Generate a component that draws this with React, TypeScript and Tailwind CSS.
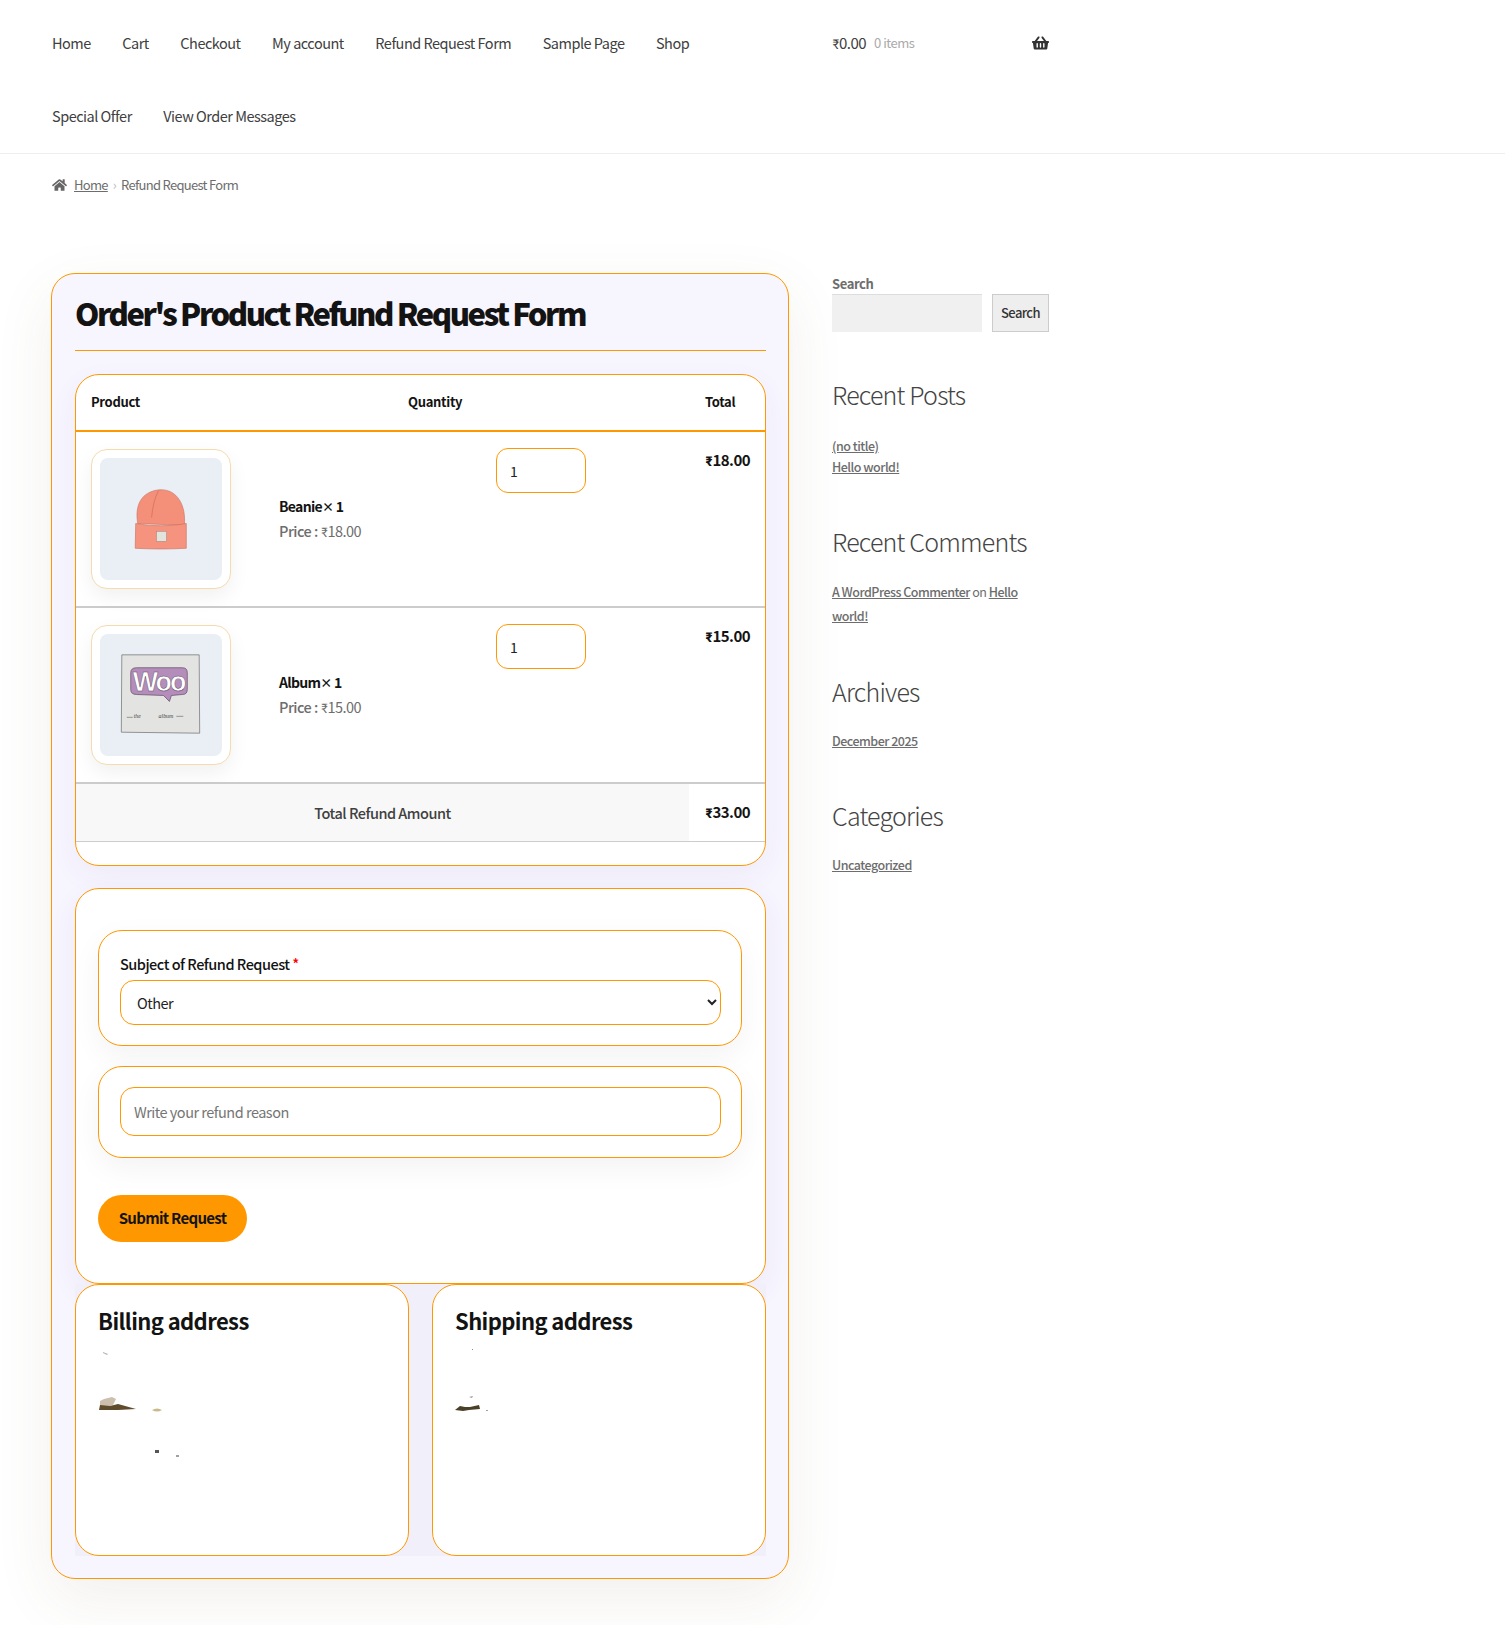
import { FaHome, FaShoppingBasket } from "react-icons/fa"

const font = "font-['Noto_Sans_CJK_SC','Source_Sans_3','Noto_Sans',sans-serif]"

const navItems = [
  "Home",
  "Cart",
  "Checkout",
  "My account",
  "Refund Request Form",
  "Sample Page",
  "Shop",
  "Special Offer",
  "View Order Messages",
]

// leftover smudges in the address cards
const billingMarks = [
  { d: "M5 7 L10 9 L9 10 L5 8 Z", fill: "#b8b4b0" },
  { d: "M2 56 L6 54 L14 52 L18 54 L15 60 L8 62 L2 62 Z", fill: "#cdbfae" },
  { d: "M1 65 L2 60 L12 61 L20 59 L38 64 L20 65 Z", fill: "#5f4c2c" },
  { d: "M54 65 Q59 62 64 65 Q59 68 54 65 Z", fill: "#c9b98c" },
  { d: "M57 105 L61 105 L61 108 L57 108 Z", fill: "#555555" },
  { d: "M78 110 L81 110 L81 112 L78 112 Z", fill: "#a0a0a0" },
]

const shippingMarks = [
  { d: "M17 4 L18 4 L18 5 L17 5 Z", fill: "#888888" },
  { d: "M14 52 L18 51 L17 53 Z", fill: "#a09a90" },
  { d: "M0 65 L5 61 L10 62 L15 62 L24 60 L25 64 L14 65 L8 66 Z", fill: "#4a3f28" },
  { d: "M31 65 L33 65 L33 66 L31 66 Z", fill: "#a0a0a0" },
]

function HatImage() {
  return (
    <svg viewBox="0 0 123 123" className="h-full w-full">
      <path d="M38 66 C35 48 41 34 60 32 C78 31 87 48 85 68 Z" fill="#f4907a" stroke="#c8705f" strokeWidth="0.6" />
      <path d="M59 33 C55 40 53 50 52 60" fill="none" stroke="#d96e5a" strokeWidth="0.8" />
      <path d="M36 66 C52 69 72 69 87 66 L87 91 C70 92 52 92 35.5 91 Z" fill="#f6937f" stroke="#c46c5a" strokeWidth="0.6" />
      <rect x="57" y="74" width="10" height="10" fill="#e3e3dd" stroke="#a08078" strokeWidth="0.5" />
    </svg>
  )
}

function AlbumImage() {
  return (
    <svg viewBox="0 0 123 123" className="h-full w-full">
      <path d="M22 21 L100 21 L100.5 100 L21.5 99 Z" fill="#e3e3e1" stroke="#6b6b6b" strokeWidth="0.7" />
      <path d="M37 34 L83 34 Q88 34 88 39 L88 56 Q88 61 83 61 L72 62 L70 68 L64 62 L37 61 Q31 61 31 56 L31 39 Q31 34 37 34 Z" fill="#b48dbb" stroke="#5e4a66" strokeWidth="0.7" />
      <text x="33" y="57" fontSize="27" fontWeight="700" fill="#ffffff" stroke="#5e4a66" strokeWidth="0.5" textLength="54" fontFamily="'Liberation Sans', sans-serif">Woo</text>
      <text x="34" y="85" fontSize="6" fontStyle="italic" fill="#444444" fontFamily="'Liberation Serif', serif">the</text>
      <text x="59" y="85" fontSize="6" fontStyle="italic" fill="#444444" fontFamily="'Liberation Serif', serif">album</text>
      <path d="M27 84 L33 84 M77 83 L84 83" stroke="#444444" strokeWidth="0.5" />
    </svg>
  )
}

function ProductRow({ name, price, image }: { name: string; price: string; image: React.ReactNode }) {
  return (
    <div className="flex h-[176px] border-b-2 border-[#cccccc]">
      <div className="flex w-[317px] items-start pl-[15px] pt-[17px]">
        <div className="h-[140px] w-[140px] shrink-0 rounded-[16px] border border-[#f4dcae] bg-white p-[8px] shadow-[0_8px_20px_rgba(0,0,0,0.06)]">
          <div className="h-[122px] w-[122px] overflow-hidden rounded-[8px] bg-[#e9eff4]">{image}</div>
        </div>
        <div className="ml-[48px] flex h-[138px] flex-col justify-center leading-[24px]">
          <div className="text-[14px] font-bold tracking-[-0.7px] text-[#131313]">
            {name}
            <span className="text-[12px]">×</span> 1
          </div>
          <div className="text-[14.5px] tracking-[-0.5px] text-[#6d6d6d]">
            <span className="font-medium">Price :</span> ₹{price}
          </div>
        </div>
      </div>
      <div className="flex w-[296px] justify-center pt-[16px]">
        <input
          type="number"
          defaultValue={1}
          className="h-[45px] w-[90px] rounded-[12px] border border-[#ff9800] bg-white px-[13px] text-[14px] text-[#222222] outline-none"
        />
      </div>
      <div className="flex-1 pl-[16px] pt-[18px] text-[15px] font-bold leading-[20px] tracking-[-0.5px] text-[#131313]">₹{price}</div>
    </div>
  )
}

function AddressCard({ title, marks }: { title: string; marks: { d: string; fill: string }[] }) {
  return (
    <div className="relative h-[272px] flex-1 rounded-[24px] border border-[#ff9800] bg-white px-[22px] pt-[20px]">
      <h3 className="text-[22px] font-bold leading-[30px] tracking-[-0.6px] text-[#131313]">{title}</h3>
      <svg viewBox="0 0 120 120" className="absolute left-[22px] top-[60px] h-[120px] w-[120px]">
        {marks.map((m) => (
          <path key={m.d} d={m.d} fill={m.fill} />
        ))}
      </svg>
    </div>
  )
}

function SidebarHeading({ children }: { children: React.ReactNode }) {
  return <h2 className="text-[25px] font-light leading-[32px] tracking-[-0.8px] text-[#444444]">{children}</h2>
}

const sideLink = "text-[12.5px] font-medium tracking-[-0.5px] text-[#6d6d6d] underline"

export default function App() {
  return (
    <div className={`${font} min-h-[1625px] bg-white text-[#43454b]`}>
      <header className="h-[154px] border-b border-[#eeeeee] pl-[52px]">
        <div className="flex w-[997px]">
          <nav className="flex w-[737px] flex-wrap gap-x-[31.5px] pt-[6px] text-[14.5px] tracking-[-0.5px] text-[#404040]">
            {navItems.map((item) => (
              <a key={item} className="flex h-[73px] items-center">
                {item}
              </a>
            ))}
          </nav>
          <div className="ml-[43px] flex h-[73px] w-[217px] items-center pt-[13px]">
            <span className="text-[15px] tracking-[-0.5px] text-[#404040]">₹0.00</span>
            <span className="ml-[8px] text-[13px] tracking-[-0.5px] text-[#aaaaaa]">0 items</span>
            <FaShoppingBasket className="ml-auto h-[16px] w-[17px] text-[#333333]" />
          </div>
        </div>
      </header>

      <div className="flex items-center pl-[52px] pt-[21px] text-[13px] leading-[20px] tracking-[-0.7px] text-[#6d6d6d]">
        <FaHome className="mr-[7px] h-[14px] w-[15px] text-[#666666]" />
        <a className="underline">Home</a>
        <span className="mx-[5px] text-[13px] text-[#bbbbbb]">›</span>
        <span>Refund Request Form</span>
      </div>

      <div className="flex pl-[51px] pt-[78px]">
        <main className="h-[1306px] w-[738px] rounded-[24px] border border-[#ff9800] bg-[#f7f5fe] pl-[23px] pr-[22px] shadow-[0_20px_60px_rgba(110,90,50,0.09)]">
          <h1 className="mt-[17px] border-b border-[#ff9800] pb-[15px] text-[31px] font-black leading-[44px] tracking-[-2.45px] text-[#131313]">
            Order's Product Refund Request Form
          </h1>

          <section className="mt-[23px] h-[492px] overflow-hidden rounded-[24px] border border-[#ff9800] bg-white shadow-[0_10px_30px_rgba(70,50,150,0.05)]">
            <div className="flex h-[57px] items-center border-b-2 border-[#ff9800] pb-[2px] text-[13px] font-bold tracking-[-0.3px] text-[#131313]">
              <div className="w-[317px] pl-[15px]">Product</div>
              <div className="w-[296px] pl-[15px]">Quantity</div>
              <div className="flex-1 pl-[16px]">Total</div>
            </div>
            <ProductRow name="Beanie" price="18.00" image={<HatImage />} />
            <ProductRow name="Album" price="15.00" image={<AlbumImage />} />
            <div className="flex h-[58px] border-b border-[#cccccc]">
              <div className="flex w-[613px] items-center justify-center bg-[#f8f8f8] text-[14.5px] font-medium tracking-[-0.5px] text-[#404040]">
                Total Refund Amount
              </div>
              <div className="flex flex-1 items-center pl-[16px] text-[15px] font-bold tracking-[-0.5px] text-[#131313]">₹33.00</div>
            </div>
          </section>

          <section className="mt-[22px] h-[396px] rounded-[24px] border border-[#ff9800] bg-white pl-[22px] pr-[23px] pt-[41px] shadow-[0_10px_30px_rgba(70,50,150,0.06)]">
            <div className="h-[116px] rounded-[24px] border border-[#ff9800] bg-white pl-[21px] pr-[20px] pt-[21px] shadow-[0_10px_30px_rgba(0,0,0,0.05)]">
              <label className="block text-[14.5px] font-medium leading-[24px] tracking-[-0.5px] text-[#131313]">
                Subject of Refund Request <span className="text-[#ff0000]">*</span>
              </label>
              <select
                defaultValue="Other"
                className="mt-[4px] h-[45px] w-full rounded-[14px] border border-[#ff9800] bg-white pl-[12px] text-[14.5px] tracking-[-0.5px] text-[#222222] outline-none"
              >
                <option>Other</option>
              </select>
            </div>
            <div className="mt-[20px] h-[92px] rounded-[24px] border border-[#ff9800] bg-white pl-[21px] pr-[20px] pt-[20px] shadow-[0_10px_30px_rgba(0,0,0,0.05)]">
              <input
                placeholder="Write your refund reason"
                className="h-[49px] w-full rounded-[14px] border border-[#ff9800] bg-white px-[13px] text-[14.5px] tracking-[-0.5px] text-[#222222] outline-none placeholder:text-[#757575]"
              />
            </div>
            <button className="mt-[37px] h-[47px] w-[149px] rounded-full bg-[#ff9800] text-[15px] font-bold tracking-[-0.7px] text-[#131313]">
              Submit Request
            </button>
          </section>

          <div className="flex gap-[23px] bg-[#f1eff9]">
            <AddressCard title="Billing address" marks={billingMarks} />
            <AddressCard title="Shipping address" marks={shippingMarks} />
          </div>
        </main>

        <aside className="ml-[43px] w-[217px]">
          <div className="text-[13px] font-semibold leading-[21px] tracking-[-0.4px] text-[#6d6d6d]">Search</div>
          <div className="flex gap-[10px]">
            <input className="h-[38px] w-[150px] border-t border-[#dddddd] bg-[#f0f0f0] px-[8px] outline-none" />
            <button className="h-[38px] w-[57px] border border-[#cccccc] bg-[#eeeeee] text-[13px] font-medium tracking-[-0.6px] text-[#333333]">
              Search
            </button>
          </div>

          <div className="mt-[46px]">
            <SidebarHeading>Recent Posts</SidebarHeading>
          </div>
          <div className="mt-[25px] flex flex-col leading-[21px]">
            <a className={sideLink}>(no title)</a>
            <a className={sideLink}>Hello world!</a>
          </div>

          <div className="mt-[48px]">
            <SidebarHeading>Recent Comments</SidebarHeading>
          </div>
          <p className="mt-[23px] text-[12.5px] leading-[24px] tracking-[-0.5px] text-[#6d6d6d]">
            <a className={sideLink}>A WordPress Commenter</a> on <a className={sideLink}>Hello</a>{" "}
            <a className={`${sideLink} block`}>world!</a>
          </p>

          <div className="mt-[47px]">
            <SidebarHeading>Archives</SidebarHeading>
          </div>
          <a className={`${sideLink} mt-[24px] block leading-[20px]`}>December 2025</a>

          <div className="mt-[48px]">
            <SidebarHeading>Categories</SidebarHeading>
          </div>
          <a className={`${sideLink} mt-[24px] block leading-[20px]`}>Uncategorized</a>
        </aside>
      </div>
    </div>
  )
}
